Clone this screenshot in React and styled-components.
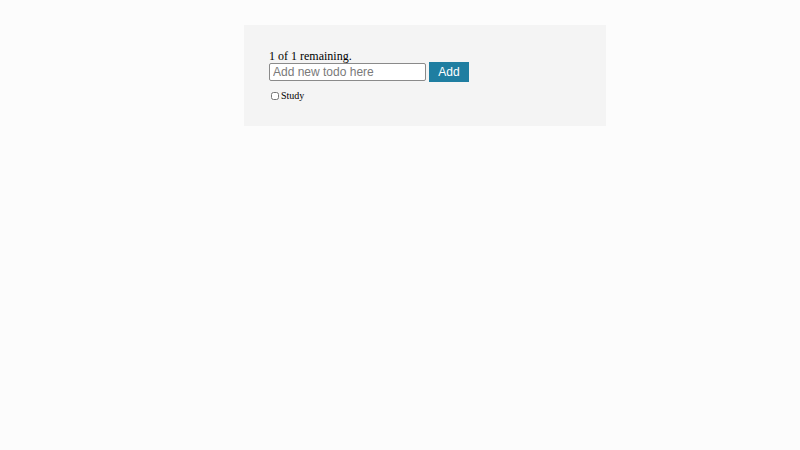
import styled, { createGlobalStyle } from "styled-components";
import { useState } from "react";

const GlobalStyle = createGlobalStyle`
  body {
    margin: 0;
    background-color: #fcfcfc;
    font-family: "Liberation Serif", "Times New Roman", serif;
    color: #000;
  }
`;

const Page = styled.div`
  padding: 25px 0 0 244px;
`;

const TodoPanel = styled.div`
  width: 362px;
  box-sizing: border-box;
  padding: 25px 25px 23px;
  background-color: #f4f4f4;
`;

const Remaining = styled.div`
  font-size: 12px;
  line-height: 12px;
`;

const TodoForm = styled.form`
  display: flex;
  align-items: center;
  gap: 3px;
`;

const TodoInput = styled.input`
  width: 157px;
  height: 18px;
  box-sizing: border-box;
  padding: 0 3px;
  border: 1px solid #8a8a8a;
  border-radius: 2px;
  background: #fff;
  font-family: "Liberation Sans", Arial, sans-serif;
  font-size: 12px;
  outline: none;

  &::placeholder {
    color: #7a7a7a;
  }
`;

const AddButton = styled.button`
  height: 20px;
  width: 40px;
  padding: 0;
  border: none;
  background-color: #1f7ea1;
  color: #fff;
  font-family: "Liberation Sans", Arial, sans-serif;
  font-size: 12px;
  cursor: pointer;
`;

const TodoList = styled.ul`
  list-style: none;
  margin: 7px 0 0;
  padding: 0;
`;

const TodoItem = styled.li`
  display: flex;
  align-items: center;
  font-size: 10px;
  line-height: 14px;

  input {
    width: 8px;
    height: 8px;
    margin: 0 2px 0 2px;
  }
`;

function App() {
  const [todos, setTodos] = useState([{ text: "Study", done: false }]);
  const [value, setValue] = useState("");
  const left = todos.filter(t => !t.done).length;

  return (
    <>
      <GlobalStyle />
      <Page>
        <TodoPanel>
          <Remaining>{left} of {todos.length} remaining.</Remaining>
          <TodoForm onSubmit={e => { e.preventDefault(); if (value) { setTodos([...todos, { text: value, done: false }]); setValue(""); } }}>
            <TodoInput
              placeholder="Add new todo here"
              value={value}
              onChange={e => setValue(e.target.value)}
            />
            <AddButton type="submit">Add</AddButton>
          </TodoForm>
          <TodoList>
            {todos.map((todo, i) => (
              <TodoItem key={i}>
                <input
                  type="checkbox"
                  checked={todo.done}
                  onChange={() => setTodos(todos.map((t, j) => j === i ? { ...t, done: !t.done } : t))}
                />
                {todo.text}
              </TodoItem>
            ))}
          </TodoList>
        </TodoPanel>
      </Page>
    </>
  );
}

export default App;
